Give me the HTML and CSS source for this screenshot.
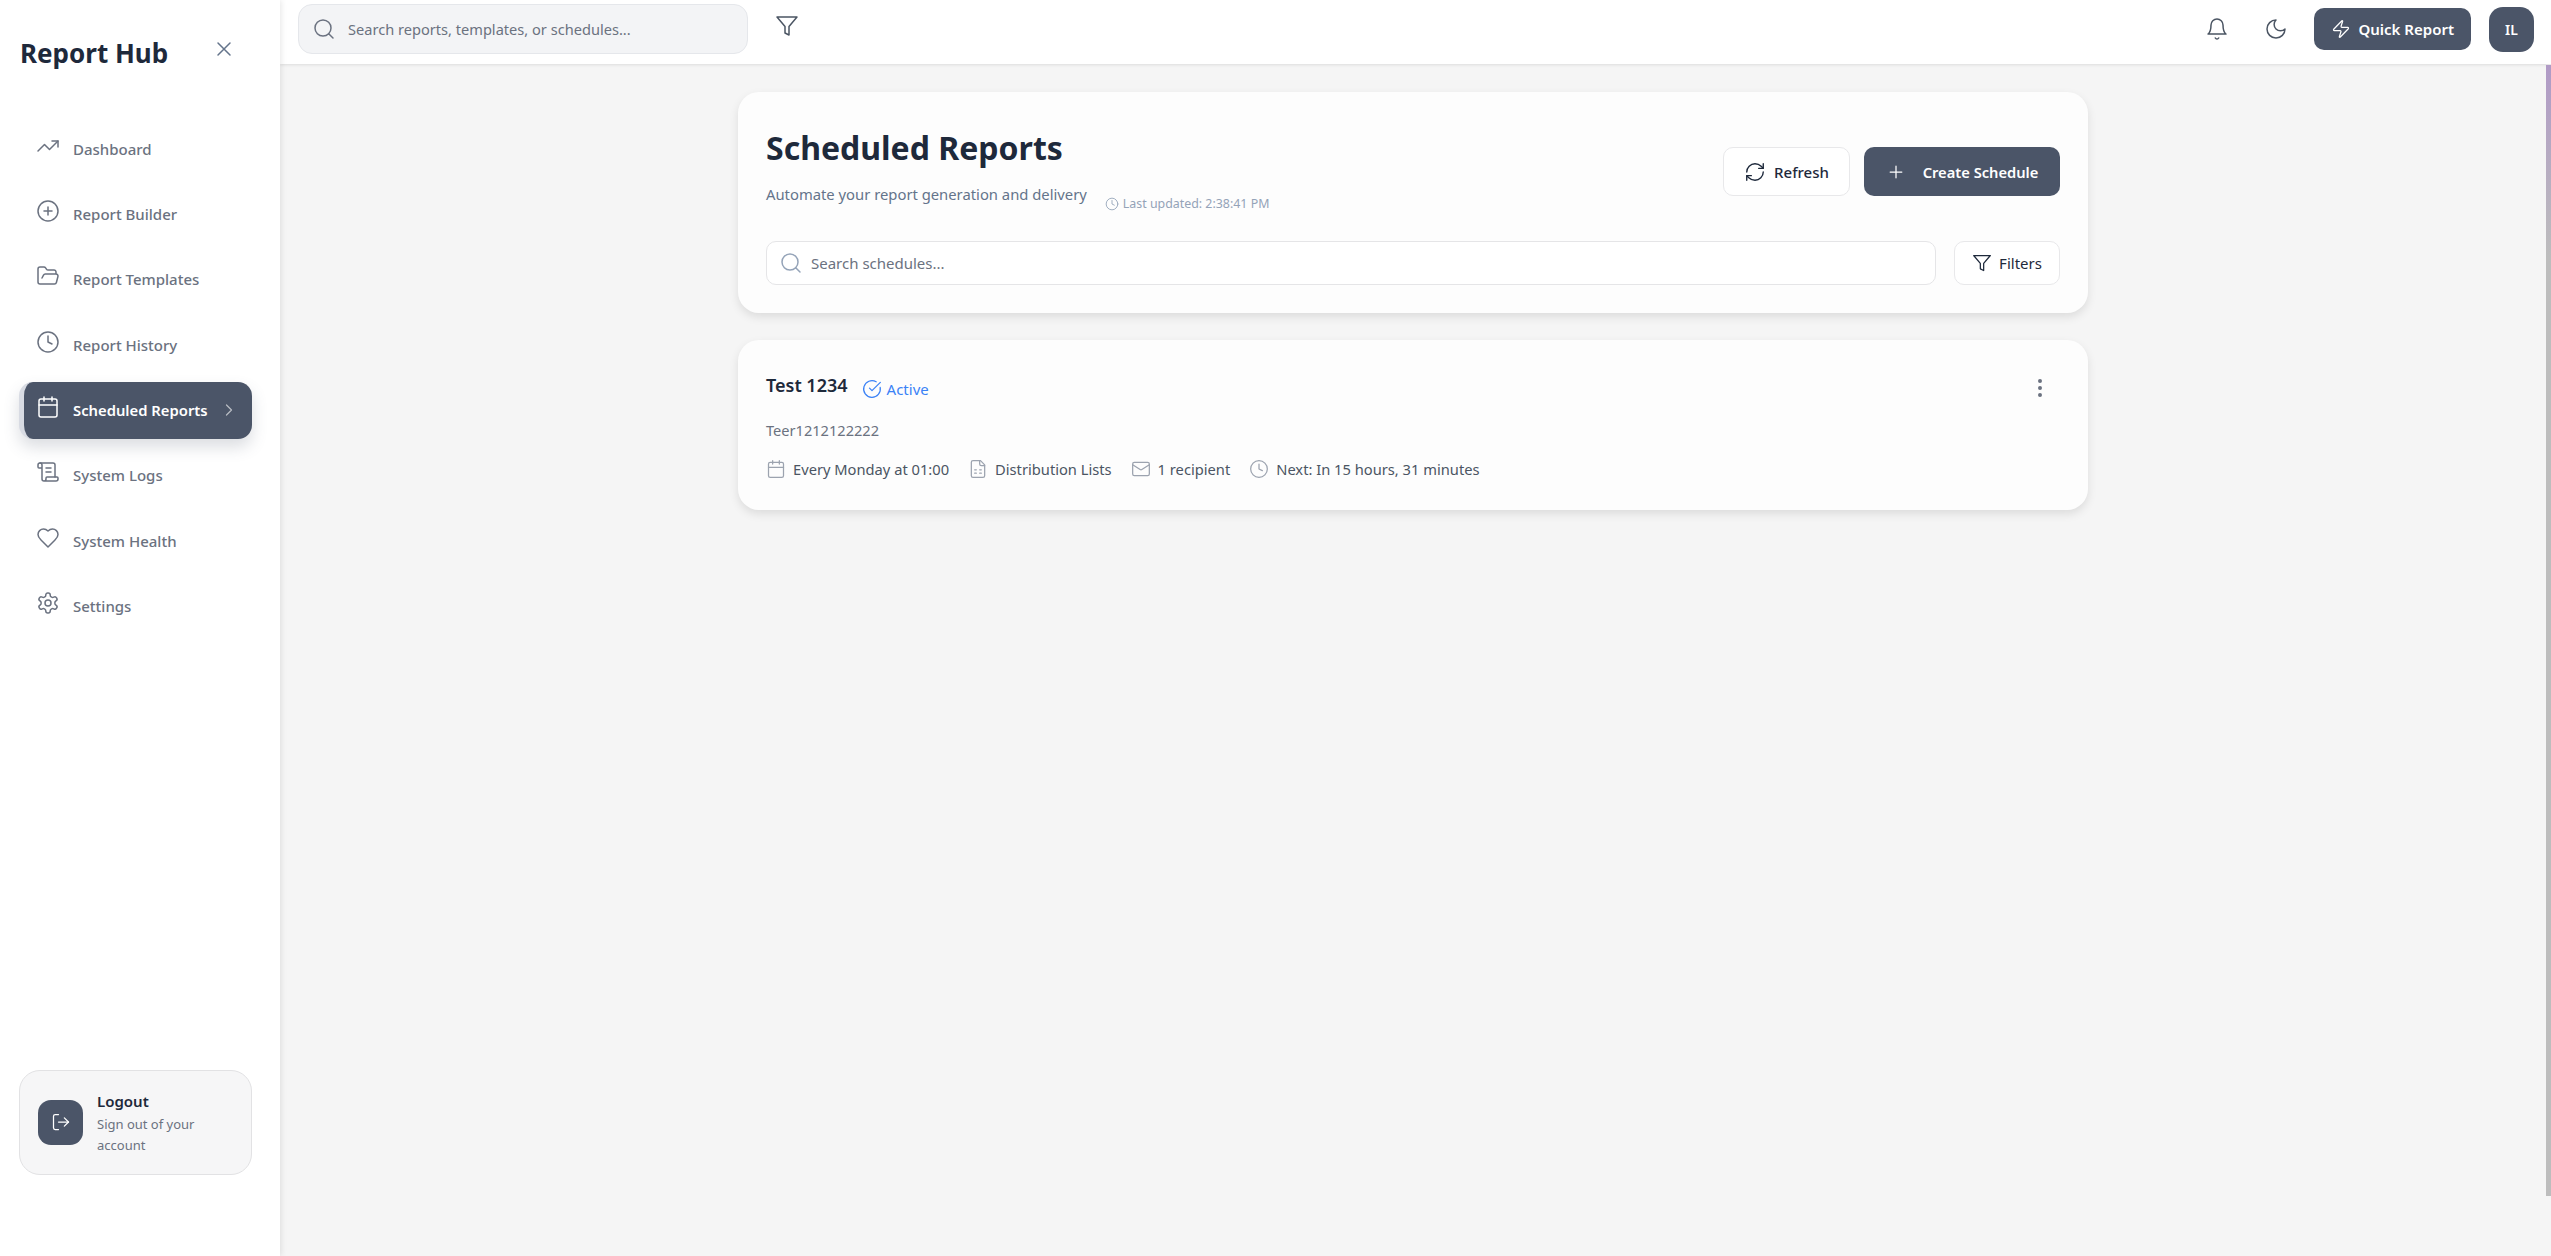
FILE: index.html
```html
<!DOCTYPE html>
<html lang="en">
<head>
  <meta charset="UTF-8">
  <meta name="viewport" content="width=device-width, initial-scale=1.0">
  <title>Report Hub</title>
  <link rel="stylesheet" href="styles.css">
</head>
<body>
  <!-- icon sprite -->
  <svg class="sprite" xmlns="http://www.w3.org/2000/svg">
    <symbol id="i-trend" viewBox="0 0 24 24"><polyline points="22 7 13.5 15.5 8.5 10.5 2 17"/><polyline points="16 7 22 7 22 13"/></symbol>
    <symbol id="i-plus-circle" viewBox="0 0 24 24"><circle cx="12" cy="12" r="10"/><path d="M8 12h8M12 8v8"/></symbol>
    <symbol id="i-folder" viewBox="0 0 24 24"><path d="m6 14 1.5-2.9A2 2 0 0 1 9.24 10H20a2 2 0 0 1 1.94 2.5l-1.54 6a2 2 0 0 1-1.95 1.5H4a2 2 0 0 1-2-2V5a2 2 0 0 1 2-2h3.9a2 2 0 0 1 1.69.9l.81 1.2a2 2 0 0 0 1.67.9H18a2 2 0 0 1 2 2v2"/></symbol>
    <symbol id="i-clock" viewBox="0 0 24 24"><circle cx="12" cy="12" r="10"/><polyline points="12 6 12 12 16 14"/></symbol>
    <symbol id="i-calendar" viewBox="0 0 24 24"><path d="M8 2v4M16 2v4"/><rect x="3" y="4" width="18" height="18" rx="2"/><path d="M3 10h18"/></symbol>
    <symbol id="i-scroll" viewBox="0 0 24 24"><path d="M15 12h-5M15 8h-5M19 17V5a2 2 0 0 0-2-2H4"/><path d="M8 21h12a2 2 0 0 0 2-2v-1a1 1 0 0 0-1-1H11a1 1 0 0 0-1 1v1a2 2 0 1 1-4 0V5a2 2 0 1 0-4 0v2a1 1 0 0 0 1 1h3"/></symbol>
    <symbol id="i-heart" viewBox="0 0 24 24"><path d="M19 14c1.49-1.46 3-3.21 3-5.5A5.5 5.5 0 0 0 16.5 3c-1.76 0-3 .5-4.5 2-1.5-1.5-2.74-2-4.5-2A5.5 5.5 0 0 0 2 8.5c0 2.3 1.5 4.05 3 5.5l7 7Z"/></symbol>
    <symbol id="i-gear" viewBox="0 0 24 24"><path d="M12.22 2h-.44a2 2 0 0 0-2 2v.18a2 2 0 0 1-1 1.73l-.43.25a2 2 0 0 1-2 0l-.15-.08a2 2 0 0 0-2.73.73l-.22.38a2 2 0 0 0 .73 2.73l.15.1a2 2 0 0 1 1 1.72v.51a2 2 0 0 1-1 1.74l-.15.09a2 2 0 0 0-.73 2.73l.22.38a2 2 0 0 0 2.73.73l.15-.08a2 2 0 0 1 2 0l.43.25a2 2 0 0 1 1 1.73V20a2 2 0 0 0 2 2h.44a2 2 0 0 0 2-2v-.18a2 2 0 0 1 1-1.73l.43-.25a2 2 0 0 1 2 0l.15.08a2 2 0 0 0 2.73-.73l.22-.39a2 2 0 0 0-.73-2.73l-.15-.08a2 2 0 0 1-1-1.74v-.5a2 2 0 0 1 1-1.74l.15-.09a2 2 0 0 0 .73-2.73l-.22-.38a2 2 0 0 0-2.73-.73l-.15.08a2 2 0 0 1-2 0l-.43-.25a2 2 0 0 1-1-1.73V4a2 2 0 0 0-2-2z"/><circle cx="12" cy="12" r="3"/></symbol>
    <symbol id="i-close" viewBox="0 0 24 24"><path d="M18 6 6 18M6 6l12 12"/></symbol>
    <symbol id="i-chevron" viewBox="0 0 24 24"><path d="m9 18 6-6-6-6"/></symbol>
    <symbol id="i-logout" viewBox="0 0 24 24"><path d="M9 21H5a2 2 0 0 1-2-2V5a2 2 0 0 1 2-2h4"/><polyline points="16 17 21 12 16 7"/><line x1="21" y1="12" x2="9" y2="12"/></symbol>
    <symbol id="i-search" viewBox="0 0 24 24"><circle cx="11" cy="11" r="8"/><path d="m21 21-4.3-4.3"/></symbol>
    <symbol id="i-filter" viewBox="0 0 24 24"><polygon points="22 3 2 3 10 12.46 10 19 14 21 14 12.46 22 3"/></symbol>
    <symbol id="i-bell" viewBox="0 0 24 24"><path d="M6 8a6 6 0 0 1 12 0c0 7 3 9 3 9H3s3-2 3-9"/><path d="M10.3 21a1.94 1.94 0 0 0 3.4 0"/></symbol>
    <symbol id="i-moon" viewBox="0 0 24 24"><path d="M12 3a6 6 0 0 0 9 9 9 9 0 1 1-9-9Z"/></symbol>
    <symbol id="i-zap" viewBox="0 0 24 24"><path d="M4 14a1 1 0 0 1-.78-1.63l9.9-10.2a.5.5 0 0 1 .86.46l-1.92 6.02A1 1 0 0 0 13 10h7a1 1 0 0 1 .78 1.63l-9.9 10.2a.5.5 0 0 1-.86-.46l1.92-6.02A1 1 0 0 0 11 14z"/></symbol>
    <symbol id="i-refresh" viewBox="0 0 24 24"><path d="M3 12a9 9 0 0 1 9-9 9.75 9.75 0 0 1 6.74 2.74L21 8"/><path d="M21 3v5h-5"/><path d="M21 12a9 9 0 0 1-9 9 9.75 9.75 0 0 1-6.74-2.74L3 16"/><path d="M8 16H3v5"/></symbol>
    <symbol id="i-plus" viewBox="0 0 24 24"><path d="M5 12h14M12 5v14"/></symbol>
    <symbol id="i-check" viewBox="0 0 24 24"><path d="M21.801 10A10 10 0 1 1 17 3.335"/><path d="m9 11 3 3L22 4"/></symbol>
    <symbol id="i-doc" viewBox="0 0 24 24"><path d="M15 2H6a2 2 0 0 0-2 2v16a2 2 0 0 0 2 2h12a2 2 0 0 0 2-2V7Z"/><path d="M14 2v4a2 2 0 0 0 2 2h4"/><path d="M8 13h2M14 13h2M8 17h2M14 17h2"/></symbol>
    <symbol id="i-mail" viewBox="0 0 24 24"><rect x="2" y="4" width="20" height="16" rx="2"/><path d="m22 7-8.97 5.7a1.94 1.94 0 0 1-2.06 0L2 7"/></symbol>
    <symbol id="i-dots" viewBox="0 0 24 24"><circle cx="12" cy="5" r="1"/><circle cx="12" cy="12" r="1"/><circle cx="12" cy="19" r="1"/></symbol>
  </svg>

  <div class="app">
    <aside class="sidebar">
      <div class="brand">
        <h1>Report Hub</h1>
        <button class="close-btn"><svg class="icon"><use href="#i-close"/></svg></button>
      </div>

      <nav class="nav">
        <a class="nav-item"><svg class="icon"><use href="#i-trend"/></svg><span>Dashboard</span></a>
        <a class="nav-item"><svg class="icon"><use href="#i-plus-circle"/></svg><span>Report Builder</span></a>
        <a class="nav-item"><svg class="icon"><use href="#i-folder"/></svg><span>Report Templates</span></a>
        <a class="nav-item"><svg class="icon"><use href="#i-clock"/></svg><span>Report History</span></a>
        <a class="nav-item active"><svg class="icon"><use href="#i-calendar"/></svg><span>Scheduled Reports</span><svg class="icon chevron"><use href="#i-chevron"/></svg></a>
        <a class="nav-item"><svg class="icon"><use href="#i-scroll"/></svg><span>System Logs</span></a>
        <a class="nav-item"><svg class="icon"><use href="#i-heart"/></svg><span>System Health</span></a>
        <a class="nav-item"><svg class="icon"><use href="#i-gear"/></svg><span>Settings</span></a>
      </nav>

      <div class="logout">
        <div class="logout-icon"><svg class="icon"><use href="#i-logout"/></svg></div>
        <div class="logout-text">
          <strong>Logout</strong>
          <small>Sign out of your account</small>
        </div>
      </div>
    </aside>

    <div class="content">
      <header class="topbar">
        <div class="top-search">
          <svg class="icon"><use href="#i-search"/></svg>
          <span>Search reports, templates, or schedules...</span>
        </div>
        <svg class="icon top-filter"><use href="#i-filter"/></svg>
        <div class="top-right">
          <svg class="icon top-icon"><use href="#i-bell"/></svg>
          <svg class="icon top-icon"><use href="#i-moon"/></svg>
          <button class="quick-btn"><svg class="icon"><use href="#i-zap"/></svg>Quick Report</button>
          <div class="avatar">IL</div>
        </div>
      </header>

      <main class="main">
        <section class="card page-head">
          <div class="head-row">
            <div>
              <h2>Scheduled Reports</h2>
              <div class="sub-row">
                <p>Automate your report generation and delivery</p>
                <span class="updated"><svg class="icon"><use href="#i-clock"/></svg>Last updated: 2:38:41 PM</span>
              </div>
            </div>
            <div class="head-actions">
              <button class="btn"><svg class="icon"><use href="#i-refresh"/></svg>Refresh</button>
              <button class="btn btn-dark"><svg class="icon"><use href="#i-plus"/></svg>Create Schedule</button>
            </div>
          </div>
          <div class="search-row">
            <div class="search-box">
              <svg class="icon"><use href="#i-search"/></svg>
              <span>Search schedules...</span>
            </div>
            <button class="btn btn-filter"><svg class="icon"><use href="#i-filter"/></svg>Filters</button>
          </div>
        </section>

        <section class="card schedule">
          <div class="schedule-info">
            <div class="schedule-title">
              <h3>Test 1234</h3>
              <span class="status"><svg class="icon"><use href="#i-check"/></svg>Active</span>
            </div>
            <p class="schedule-desc">Teer1212122222</p>
            <div class="meta">
              <span><svg class="icon"><use href="#i-calendar"/></svg>Every Monday at 01:00</span>
              <span><svg class="icon"><use href="#i-doc"/></svg>Distribution Lists</span>
              <span><svg class="icon"><use href="#i-mail"/></svg>1 recipient</span>
              <span><svg class="icon"><use href="#i-clock"/></svg>Next: In 15 hours, 31 minutes</span>
            </div>
          </div>
          <svg class="icon dots"><use href="#i-dots"/></svg>
        </section>
      </main>
    </div>
  </div>
</body>
</html>
```

FILE: styles.css
```css
* {
  box-sizing: border-box;
}
html, body {
  height: 100%;
}
body {
  margin: 0;
  font-family: "Noto Sans", "Open Sans", sans-serif;
  color: #1e293b;
  background-color: #f5f5f5;
  overflow: hidden;
}
h1, h2, h3, p {
  margin: 0;
}
button {
  font-family: inherit;
  border: none;
  background: none;
  padding: 0;
}
.sprite {
  display: none;
}
.icon {
  width: 24px;
  height: 24px;
  flex-shrink: 0;
  fill: none;
  stroke: currentColor;
  stroke-width: 1.5;
  stroke-linecap: round;
  stroke-linejoin: round;
}

.app {
  display: flex;
  height: 1256px;
}

/* Sidebar */
.sidebar {
  width: 280px;
  flex-shrink: 0;
  display: flex;
  flex-direction: column;
  padding: 0 28px 0 19px;
  background-color: #fff;
  box-shadow: 1px 0 6px rgba(0, 0, 0, 0.1);
  position: relative;
  z-index: 2;
}
.brand {
  display: flex;
  align-items: flex-start;
  justify-content: space-between;
  padding: 33px 16px 0 1px;
  height: 120px;
}
.brand h1 {
  font-size: 26px;
  line-height: 40px;
  font-weight: 700;
  color: #1e293b;
}
.close-btn {
  color: #64748b;
  width: 24px;
  height: 24px;
  margin-top: 4px;
}
.nav {
  display: flex;
  flex-direction: column;
  gap: 8.4px;
}
.nav-item {
  display: flex;
  align-items: center;
  height: 57px;
  padding-left: 17px;
  border-radius: 14px;
  color: #6b7280;
  font-size: 15px;
  font-weight: 500;
}
.nav-item .icon {
  margin-right: 13px;
  margin-top: -6px;
}
.nav-item.active {
  color: #fff;
  font-size: 14.8px;
  font-weight: 600;
  background-color: #4b5568;
  border-left: 5px solid #d8dbe3;
  padding-left: 12px;
  box-shadow: 0 8px 16px rgba(75, 85, 104, 0.2);
}
.nav-item .chevron {
  width: 20px;
  height: 20px;
  margin: 0 13px 0 auto;
  opacity: 0.6;
}
.logout {
  display: flex;
  align-items: center;
  gap: 14px;
  margin-top: auto;
  margin-bottom: 81px;
  height: 105px;
  padding: 0 18px;
  background-color: #f6f6f7;
  border: 1px solid #e2e2e4;
  border-radius: 21px;
}
.logout-icon {
  width: 45px;
  height: 45px;
  flex-shrink: 0;
  display: flex;
  align-items: center;
  justify-content: center;
  color: #fff;
  background-color: #4b5568;
  border-radius: 13px;
}
.logout-icon .icon {
  width: 20px;
  height: 20px;
  margin-top: -2px;
}
.logout-text strong {
  display: block;
  font-size: 15px;
  line-height: 22px;
  margin-bottom: 2px;
  font-weight: 600;
  color: #1e293b;
}
.logout-text small {
  display: block;
  font-size: 13px;
  line-height: 21px;
  color: #6b7280;
}

/* Top bar */
.content {
  flex: 1;
  min-width: 0;
  display: flex;
  flex-direction: column;
}
.topbar {
  height: 64px;
  flex-shrink: 0;
  display: flex;
  align-items: center;
  padding: 0 17px 0 18px;
  background-color: #fff;
  box-shadow: 0 1px 3px rgba(0, 0, 0, 0.1);
  position: relative;
}
.top-search {
  display: flex;
  align-items: center;
  gap: 12px;
  width: 450px;
  height: 50px;
  margin-top: -6px;
  padding-left: 13px;
  color: #6b7280;
  font-size: 14.6px;
  background-color: #f3f4f6;
  border: 1px solid #e5e7eb;
  border-radius: 14px;
}
.top-filter {
  margin-left: 27px;
  margin-top: -12px;
  color: #4b5563;
}
.top-right {
  display: flex;
  align-items: center;
  margin-left: auto;
  margin-top: -6px;
}
.top-icon {
  color: #4b5563;
  margin-right: 35px;
}
.top-icon:nth-child(2) {
  margin-right: 26px;
}
.quick-btn {
  display: flex;
  align-items: center;
  gap: 7px;
  height: 42px;
  padding: 0 17px;
  color: #fff;
  font-size: 15px;
  font-weight: 600;
  background-color: #4b5568;
  border-radius: 10px;
}
.quick-btn .icon {
  width: 20px;
  height: 20px;
}
.avatar {
  width: 45px;
  height: 45px;
  margin-left: 18px;
  display: flex;
  align-items: center;
  justify-content: center;
  color: #fff;
  font-size: 14px;
  font-weight: 600;
  background-color: #4b5568;
  border-radius: 14px;
}

/* Main */
.main {
  flex: 1;
  padding-top: 28px;
  padding-right: 5px;
  position: relative;
  display: flex;
  flex-direction: column;
  align-items: center;
  gap: 27px;
}
/* custom scrollbar thumb */
.main::after {
  content: "";
  position: absolute;
  top: 1px;
  right: 0;
  width: 5px;
  height: 1131px;
  background: linear-gradient(#b09ac6, #bdbdbd 17%);
}
.card {
  width: 1350px;
  background-color: #fdfdfd;
  border-radius: 21px;
  box-shadow: 0 4px 10px rgba(0, 0, 0, 0.1);
}
.page-head {
  height: 221px;
  padding: 34px 28px 0;
}
.head-row {
  display: flex;
  justify-content: space-between;
  align-items: flex-start;
}
.head-row h2 {
  font-size: 32px;
  line-height: 44px;
  font-weight: 700;
  color: #1e293b;
}
.sub-row {
  display: flex;
  align-items: flex-end;
  gap: 18px;
  margin-top: 12px;
}
.sub-row p {
  font-size: 14.8px;
  line-height: 24px;
  color: #64748b;
}
.updated {
  display: flex;
  align-items: center;
  gap: 4px;
  font-size: 12.4px;
  color: #94a3b8;
  margin-bottom: -6px;
}
.updated .icon {
  width: 14px;
  height: 14px;
}
.head-actions {
  display: flex;
  gap: 14px;
  margin-top: 21px;
}
.btn {
  display: flex;
  align-items: center;
  justify-content: center;
  gap: 8px;
  height: 49px;
  width: 127px;
  color: #1e293b;
  font-size: 15px;
  font-weight: 500;
  background-color: #fff;
  border: 1px solid #e8e8ea;
  border-radius: 10px;
}
.btn .icon {
  width: 22px;
  height: 22px;
}
.btn-dark {
  width: 196px;
  gap: 17px;
  color: #fff;
  font-size: 14.7px;
  font-weight: 600;
  background-color: #4b5568;
  border: none;
}
.btn-dark .icon {
  width: 20px;
  height: 20px;
}
.search-row {
  display: flex;
  gap: 18px;
  margin-top: 35px;
}
.search-box {
  flex: 1;
  display: flex;
  align-items: center;
  gap: 8px;
  height: 44px;
  padding-left: 12px;
  color: #6b7280;
  font-size: 15px;
  background-color: #fff;
  border: 1px solid #e5e5e7;
  border-radius: 10px;
}
.search-box .icon {
  color: #94a3b8;
}
.btn-filter {
  width: 106px;
  height: 44px;
  gap: 7px;
  font-weight: 400;
}
.btn-filter .icon {
  width: 20px;
  height: 20px;
}
.schedule {
  display: flex;
  justify-content: space-between;
  height: 170px;
  padding: 30px 28px 0;
}
.schedule-title {
  display: flex;
  align-items: center;
  gap: 14px;
}
.schedule-title h3 {
  font-size: 18px;
  line-height: 30px;
  font-weight: 600;
  color: #1e293b;
}
.status {
  display: flex;
  align-items: center;
  gap: 5px;
  color: #3b82f6;
  font-size: 15px;
  margin-top: 7px;
}
.status .icon {
  width: 20px;
  height: 20px;
}
.schedule-desc {
  margin-top: 18px;
  font-size: 14.6px;
  line-height: 24px;
  color: #6b7280;
}
.meta {
  display: flex;
  gap: 19px;
  margin-top: 15px;
  font-size: 14.7px;
  line-height: 24px;
  color: #4b5563;
}
.meta span {
  display: flex;
  align-items: center;
  gap: 7px;
}
.meta .icon {
  width: 20px;
  height: 20px;
  color: #9ca3af;
}
.dots {
  margin: 6px 8px 0 0;
  color: #6b7280;
  stroke-width: 2;
}
```
